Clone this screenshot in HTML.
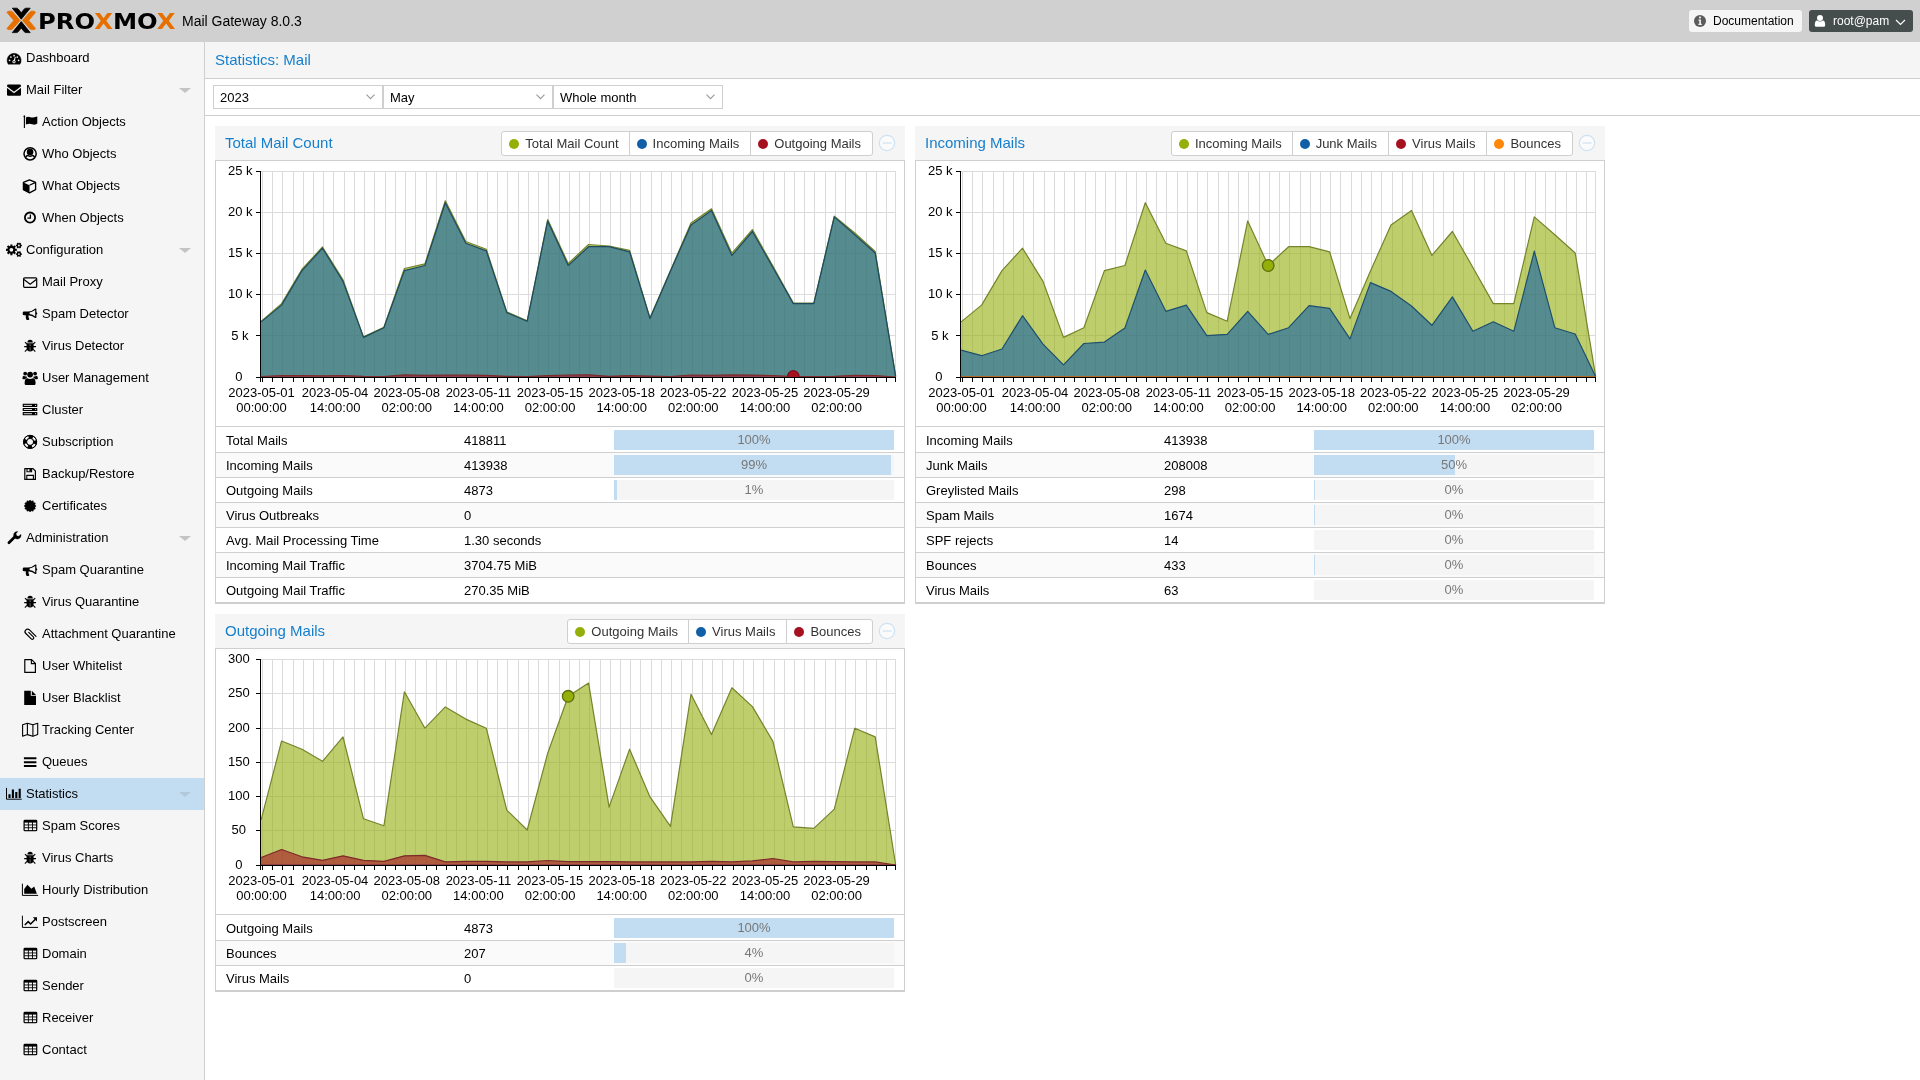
<!DOCTYPE html>
<html lang="en"><head><meta charset="utf-8"><title>Proxmox Mail Gateway</title>
<style>
*{box-sizing:border-box;margin:0;padding:0}
html,body{width:1920px;height:1080px;overflow:hidden}
body{will-change:transform;position:relative;background:#f5f5f5;font-family:"Liberation Sans",Helvetica,Arial,sans-serif;font-size:13px;color:#000}
#hdr{position:absolute;left:0;top:0;width:1920px;height:42px;background:#d0d0d0}
#logo{position:absolute;left:5px;top:0}
#word{position:absolute;left:37.6px;top:8px;font-family:"DejaVu Sans","Liberation Sans",sans-serif;font-weight:bold;font-size:21.4px;line-height:28px;letter-spacing:0;transform-origin:0 50%;transform:scaleX(1.134);color:#000;white-space:nowrap}
#word span{color:#e57000}
#ver{position:absolute;left:182px;top:12px;font-size:14px;line-height:18px}
#docbtn{position:absolute;left:1689px;top:10px;width:113px;height:22px;background:#f5f5f5;border-radius:3px;font-size:12px;line-height:22px;padding-left:24px}
#docbtn .ic{position:absolute;left:4px;top:4px;width:14px;height:14px}
#docbtn svg,#userbtn svg{display:block}
#userbtn{position:absolute;left:1809px;top:10px;width:104px;height:22px;background:#464d4d;border-radius:3px;font-size:12px;line-height:22px;color:#fff;padding-left:24px}
#userbtn .ic{position:absolute;left:5px;top:4px}
#userbtn .chev{position:absolute;left:86px;top:9px}
#nav{position:absolute;left:0;top:42px;width:205px;height:1038px;border-right:1px solid #cfcfcf;background:#f5f5f5}
.ni{position:relative;height:32px;line-height:32px;white-space:nowrap}
.ni .ic{position:absolute;top:8px;width:16px;height:16px}
.ni .ic svg{display:block;overflow:visible}
.ni.l0 .ic{left:6px}
.ni.l1 .ic{left:22px}
.ni.l0 .nt{position:absolute;left:26px}
.ni.l1 .nt{position:absolute;left:42px}
.ni.sel{background:#c2ddf2}
.sel .exp{border-top-color:#b2c9dc !important}
.exp{position:absolute;left:179px;top:14px;width:0;height:0;border-left:6px solid transparent;border-right:6px solid transparent;border-top:5px solid #c4c4c4}
#main{position:absolute;left:205px;top:42px;width:1715px;height:1038px;background:#fff}
#title{position:absolute;left:0;top:0;width:1715px;height:37px;background:#f5f5f5;border-bottom:1px solid #cfcfcf;color:#157fcc;font-size:15px;line-height:36px;padding-left:10px}
#tbar{position:absolute;left:0;top:37px;width:1715px;height:37px;border-bottom:1px solid #cfcfcf;background:#fff}
.combo{position:absolute;top:6px;width:170px;height:24px;border:1px solid #cfcfcf;background:#fff;line-height:24px;padding-left:6px}
.combo svg{position:absolute;right:7px;top:8px}
.panel{position:absolute;width:690px}
.p1{left:10px;top:84px}
.p2{left:710px;top:84px}
.p3{left:10px;top:572px}
.ph{position:relative;height:34px;background:#f5f5f5}
.pt{position:absolute;left:10px;top:0;line-height:34px;font-size:15px;color:#157fcc}
.legend{position:absolute;right:32px;top:5px;height:25px;display:flex;border:1px solid #cfcfcf;border-radius:3px;background:#fff;overflow:hidden}
.li{position:relative;height:23px;line-height:23px;padding:0 11px 0 23px;border-left:1px solid #cfcfcf;color:#333;white-space:nowrap}
.li.first{border-left:none;padding-right:10px}
.li i{position:absolute;left:7px;top:7px;width:10px;height:10px;border-radius:50%}
.zoomout{position:absolute;right:9px;top:8px;width:18px;height:18px}
.zoomout svg{display:block}
.pb0{border:1px solid #cfcfcf;background:#fff}
svg.chart{display:block;font-family:"Liberation Sans",Helvetica,Arial,sans-serif;font-size:13px}
svg.chart text{fill:#000}
.tbl{border-top:1px solid #cfcfcf}
.tr{position:relative;height:25px;line-height:26px;border-bottom:1px solid #cfcfcf;background:#fff}
.tr:last-child{height:25px}
.tr:first-child{height:26px;line-height:28px}
.tr:first-child .pb{top:3px}
.tr.alt{background:#fafafa}
.c1{position:absolute;left:10px}
.c2{position:absolute;left:248px}
.pb{position:absolute;left:398px;top:2px;width:280px;height:20px;background:#f5f5f5;text-align:center;line-height:20px;color:#777}
.pb b{position:absolute;left:0;top:0;height:20px;background:#c2ddf2}
.pb em{position:relative;font-style:normal}

</style></head><body>
<div id="hdr">
<svg id="logo" width="33" height="42" viewBox="0 0 33 42"><g stroke-linejoin="round" stroke-width=".8"><path d="M7.3 8.2H11.6Q12.6 8.2 13.2 9L16.25 12.8L19.3 9Q19.9 8.2 20.9 8.2H25.2L16.25 19.2Z" fill="#000" stroke="#000"/><path d="M7.3 32.6H11.6Q12.6 32.6 13.2 31.8L16.25 28L19.3 31.8Q19.9 32.6 20.9 32.6H25.2L16.25 21.6Z" fill="#000" stroke="#000"/><path d="M2 12.4Q2.4 11.2 4 11.2H6Q7 11.2 7.7 12L15 20.4L7.7 28.8Q7 29.6 6 29.6H4Q2.4 29.6 2 28.4L8.8 20.4Z" fill="#e57000" stroke="#e57000"/><path d="M30.5 12.4Q30.1 11.2 28.5 11.2H26.500Q25.5 11.2 24.8 12L17.5 20.4L24.8 28.8Q25.5 29.6 26.5 29.6H28.5Q30.1 29.6 30.500 28.4L23.7 20.4Z" fill="#e57000" stroke="#e57000"/></g></svg>
<span id="word">PRO<span>X</span>MO<span>X</span></span>
<span id="ver">Mail Gateway 8.0.3</span>
<div id="docbtn"><span class="ic"><svg width="14" height="14" viewBox="0 0 14 14"><circle cx="7" cy="7" r="6" fill="#5b5b5b"/><path d="M5.5 5.6H7.9V9.8H8.8V11H5.4V9.8H6.3V6.8H5.5Z" fill="#f5f5f5"/><rect x="6.1" y="2.6" width="1.8" height="1.8" fill="#f5f5f5"/></svg></span>Documentation</div>
<div id="userbtn"><span class="ic"><svg width="12" height="14" viewBox="0 0 12 14"><circle cx="6" cy="4" r="3" fill="#fff"/><path d="M.8 11.2Q.8 6.6 3 6.4Q6 8.4 9 6.4Q11.2 6.6 11.2 11.2Q11.2 12.8 9.6 12.8H2.4Q.8 12.8 .8 11.2Z" fill="#fff"/></svg></span>root@pam<svg class="chev" width="11" height="7" viewBox="0 0 11 7"><path d="M1 1L5.5 5.5L10 1" fill="none" stroke="#fff" stroke-width="1.2"/></svg></div>
</div>
<div id="nav">
<div class="ni l0"><span class="ic"><svg width="16" height="16" viewBox="0 0 16 16"><path d="M2.2 14.2A7.05 7.05 0 1 1 14 14.2Z" fill="#000" stroke="#000" stroke-width=".4" stroke-linejoin="round"/><g fill="#f5f5f5"><circle cx="3.6" cy="10.3" r=".85"/><circle cx="4.9" cy="7.1" r=".85"/><circle cx="8.1" cy="5.7" r=".85"/><circle cx="11.3" cy="7.1" r=".85"/><circle cx="12.6" cy="10.3" r=".85"/><circle cx="8" cy="11.7" r="1.6"/><path d="M7.4 11.2L8.9 6.8L9.8 7.1L8.6 11.6Z"/></g><circle cx="8" cy="11.7" r=".75" fill="#000"/></svg></span><span class="nt">Dashboard</span></div>
<div class="ni l0"><span class="ic"><svg width="16" height="16" viewBox="0 0 16 16"><rect x="1" y="2.6" width="14" height="11.2" rx="1.2" fill="#000"/><path d="M.8 5L8 10.4L15.2 5" fill="none" stroke="#f5f5f5" stroke-width="1.3"/></svg></span><span class="nt">Mail Filter</span><span class="exp"></span></div>
<div class="ni l1"><span class="ic"><svg width="16" height="16" viewBox="0 0 16 16"><path d="M2.4 1.7V14" stroke="#000" stroke-width="1.1"/><circle cx="2.4" cy="2.3" r=".9"/><path d="M3.9 3.6Q6 2.2 8.4 3.2T14.9 2.6Q15.3 2.5 15.3 3V9.6Q13 11.4 10.2 10.2T3.900 10.600Z" fill="#000"/></svg></span><span class="nt">Action Objects</span></div>
<div class="ni l1"><span class="ic"><svg width="16" height="16" viewBox="0 0 16 16"><circle cx="8.1" cy="7.8" r="6.1" fill="none" stroke="#000" stroke-width="1.5"/><circle cx="8.1" cy="6.1" r="3.3" fill="#000"/><path d="M3.5 12Q4 9.4 6 9.5Q8.1 11 10.2 9.5Q12.2 9.400 12.7 12" fill="none" stroke="#000" stroke-width="1.3"/></svg></span><span class="nt">Who Objects</span></div>
<div class="ni l1"><span class="ic"><svg width="16" height="16" viewBox="0 0 16 16"><path d="M7.5 1.8L13.6 4.400V11.700L7.5 14.8L1.4 11.7V4.4Z" fill="none" stroke="#000" stroke-width="1.3" stroke-linejoin="round"/><path d="M1.4 4.4L7.5 7.2V14.8L1.400 11.7Z" fill="#000"/><path d="M7.5 7.2L13.6 4.4" stroke="#000" stroke-width="1.2"/></svg></span><span class="nt">What Objects</span></div>
<div class="ni l1"><span class="ic"><svg width="16" height="16" viewBox="0 0 16 16"><circle cx="8" cy="7.6" r="5.1" fill="none" stroke="#000" stroke-width="1.8"/><path d="M8.4 4.4V8.2H5.4" fill="none" stroke="#000" stroke-width="1.3"/></svg></span><span class="nt">When Objects</span></div>
<div class="ni l0"><span class="ic"><svg width="16" height="16" viewBox="0 0 16 16"><path d="M10.79 6.71L10.79 8.89L9.36 8.74L8.86 9.94L9.98 10.84L8.44 12.38L7.54 11.26L6.34 11.76L6.49 13.19L4.31 13.19L4.46 11.76L3.26 11.26L2.36 12.38L0.82 10.84L1.94 9.94L1.44 8.74L0.01 8.89L0.01 6.71L1.44 6.86L1.94 5.66L0.82 4.76L2.36 3.22L3.26 4.34L4.46 3.84L4.31 2.41L6.49 2.41L6.34 3.84L7.54 4.34L8.44 3.22L9.98 4.76L8.86 5.66L9.36 6.86Z" fill="#000"/><circle cx="5.4" cy="7.8" r="1.9" fill="#f5f5f5"/><path d="M15.89 2.67L15.89 4.33L15.09 4.19L14.59 5.05L15.11 5.67L13.68 6.50L13.39 5.74L12.41 5.74L12.12 6.50L10.69 5.67L11.21 5.05L10.71 4.19L9.91 4.33L9.91 2.67L10.71 2.81L11.21 1.95L10.69 1.33L12.12 0.50L12.41 1.26L13.39 1.26L13.68 0.50L15.11 1.33L14.59 1.95L15.09 2.81Z" fill="#000"/><circle cx="12.9" cy="3.5" r="0.9" fill="#f5f5f5"/><path d="M15.89 11.27L15.89 12.93L15.09 12.79L14.59 13.65L15.11 14.27L13.68 15.10L13.39 14.34L12.41 14.34L12.12 15.10L10.69 14.27L11.21 13.65L10.71 12.79L9.91 12.93L9.91 11.27L10.71 11.41L11.21 10.55L10.69 9.93L12.12 9.10L12.41 9.86L13.39 9.86L13.68 9.10L15.11 9.93L14.59 10.55L15.09 11.41Z" fill="#000"/><circle cx="12.9" cy="12.1" r="0.9" fill="#f5f5f5"/></svg></span><span class="nt">Configuration</span><span class="exp"></span></div>
<div class="ni l1"><span class="ic"><svg width="16" height="16" viewBox="0 0 16 16"><rect x="1.6" y="3.8" width="13.1" height="9.5" rx="1" fill="none" stroke="#000" stroke-width="1.2"/><path d="M2 5.6L8.1 10.2L14.3 5.6" fill="none" stroke="#000" stroke-width="1.2"/></svg></span><span class="nt">Mail Proxy</span></div>
<div class="ni l1"><span class="ic"><svg width="16" height="16" viewBox="0 0 16 16"><path d="M2 5.6H6.2Q10.6 5.2 13.3 2.6Q14.3 2.2 14.4 3.2V6.2Q15.3 6.6 15.3 7.4T14.4 8.6V11.4Q14.2 12.4 13.3 12Q10.6 9.6 6.6 9.2Q6 11 7.4 13.2Q6.6 14.3 4.6 14Q3.4 11.6 3.8 9.2H2Q.8 9.2 .7 8V6.8Q.8 5.7 2 5.6Z" fill="#000"/><path d="M7.6 6.6Q10.8 6 13.2 4.1V10.4Q10.8 8.6 7.6 8.1Z" fill="#f5f5f5"/></svg></span><span class="nt">Spam Detector</span></div>
<div class="ni l1"><span class="ic"><svg width="16" height="16" viewBox="0 0 16 16"><path d="M5.4 4.4Q5.4 1.7 8.1 1.7T10.8 4.4Z" fill="#000"/><path d="M4.6 5.2H11.6V10Q11.6 13.4 8.1 13.4T4.6 10Z" fill="#000"/><path d="M8.1 6V12.6" stroke="#666" stroke-width="1"/><path d="M2.2 8.6H14M2.9 4.2L5 6M13.3 4.2L11.2 6M2.9 13.6L5 11.4M13.3 13.6L11.2 11.4" stroke="#000" stroke-width="1.1" fill="none"/></svg></span><span class="nt">Virus Detector</span></div>
<div class="ni l1"><span class="ic"><svg width="16" height="16" viewBox="0 0 16 16"><circle cx="8.1" cy="4.6" r="2.9" fill="#000"/><path d="M3.6 14.9Q2.6 14.9 2.6 13.6Q2.6 8.2 5.4 8.2Q8.1 9.8 10.8 8.2Q13.6 8.2 13.6 13.6Q13.6 14.9 12.6 14.9Z" fill="#000"/><circle cx="3.2" cy="3.6" r="1.9" fill="#000"/><circle cx="13.1" cy="3.6" r="1.9" fill="#000"/><path d="M.4 8.4Q.4 5.8 1.8 5.8Q3.4 6.8 4.6 6.2Q4.6 7.4 5 8Q3.6 8.2 3 9.2H1.4Q.4 9.2 .4 8.4Z" fill="#000"/><path d="M15.9 8.4Q15.9 5.8 14.5 5.8Q12.9 6.8 11.7 6.2Q11.7 7.4 11.3 8Q12.7 8.2 13.3 9.2H14.9Q15.9 9.2 15.9 8.4Z" fill="#000"/></svg></span><span class="nt">User Management</span></div>
<div class="ni l1"><span class="ic"><svg width="16" height="16" viewBox="0 0 16 16"><g fill="#000"><rect x=".7" y="1.7" width="14.6" height="3.2" rx=".4"/><rect x=".7" y="5.9" width="14.6" height="3.2" rx=".4"/><rect x=".7" y="10.1" width="14.6" height="3.2" rx=".4"/></g><g fill="#f5f5f5"><rect x="1.8" y="2.9" width="8.2" height=".9"/><rect x="1.8" y="7.1" width="8.2" height=".9"/><rect x="1.8" y="11.3" width="8.2" height=".9"/><circle cx="13.6" cy="3.3" r=".6"/><circle cx="13.6" cy="7.5" r=".6"/><circle cx="13.6" cy="11.7" r=".6"/></g></svg></span><span class="nt">Cluster</span></div>
<div class="ni l1"><span class="ic"><svg width="16" height="16" viewBox="0 0 16 16"><circle cx="8.1" cy="7.9" r="5.1" fill="none" stroke="#000" stroke-width="3.6"/><circle cx="8.1" cy="7.900" r="5.1" fill="none" stroke="#f5f5f5" stroke-width="2.2" stroke-dasharray="3.6 4.41" stroke-dashoffset="-2.2"/><circle cx="8.1" cy="7.9" r="6.6" fill="none" stroke="#000" stroke-width="1"/><circle cx="8.1" cy="7.9" r="3.5" fill="none" stroke="#000" stroke-width="1"/></svg></span><span class="nt">Subscription</span></div>
<div class="ni l1"><span class="ic"><svg width="16" height="16" viewBox="0 0 16 16"><path d="M2.8 2.6H11L13.4 5V13.4H2.8Z" fill="none" stroke="#000" stroke-width="1.2" stroke-linejoin="round"/><path d="M5 2.6V5.8H9.6V2.6" fill="none" stroke="#000" stroke-width="1.1"/><rect x="7.4" y="3" width="1.6" height="2.2" fill="#000"/><path d="M4.8 13.4V9.4H11.4V13.4" fill="none" stroke="#000" stroke-width="1.1"/></svg></span><span class="nt">Backup/Restore</span></div>
<div class="ni l1"><span class="ic"><svg width="16" height="16" viewBox="0 0 16 16"><path d="M14.10 8.00L12.83 9.27L13.30 11.00L11.56 11.46L11.10 13.20L9.37 12.73L8.10 14.00L6.83 12.73L5.10 13.20L4.64 11.46L2.90 11.00L3.37 9.27L2.10 8.00L3.37 6.73L2.90 5.00L4.64 4.54L5.10 2.80L6.83 3.27L8.10 2.00L9.37 3.27L11.10 2.80L11.56 4.54L13.30 5.00L12.83 6.73Z" fill="#000" stroke="#000" stroke-width=".5" stroke-linejoin="round"/></svg></span><span class="nt">Certificates</span></div>
<div class="ni l0"><span class="ic"><svg width="16" height="16" viewBox="0 0 16 16"><path d="M2.900 12.8L9.4 6.300" stroke="#000" stroke-width="2.700" stroke-linecap="round"/><path d="M15 4.3A3.800 3.800 0 1 1 11.9 1.500L10.1 3.4L10.4 5.700L12.8 6.200Z" fill="#000" stroke="#000" stroke-width=".3"/></svg></span><span class="nt">Administration</span><span class="exp"></span></div>
<div class="ni l1"><span class="ic"><svg width="16" height="16" viewBox="0 0 16 16"><path d="M2 5.6H6.2Q10.6 5.2 13.3 2.6Q14.3 2.2 14.4 3.2V6.2Q15.3 6.6 15.3 7.4T14.4 8.6V11.4Q14.2 12.4 13.3 12Q10.6 9.6 6.6 9.2Q6 11 7.4 13.2Q6.6 14.3 4.6 14Q3.4 11.6 3.8 9.2H2Q.8 9.2 .7 8V6.8Q.8 5.7 2 5.6Z" fill="#000"/><path d="M7.6 6.6Q10.8 6 13.2 4.1V10.4Q10.8 8.6 7.6 8.1Z" fill="#f5f5f5"/></svg></span><span class="nt">Spam Quarantine</span></div>
<div class="ni l1"><span class="ic"><svg width="16" height="16" viewBox="0 0 16 16"><path d="M5.4 4.4Q5.4 1.7 8.1 1.7T10.8 4.4Z" fill="#000"/><path d="M4.6 5.2H11.6V10Q11.6 13.4 8.1 13.4T4.6 10Z" fill="#000"/><path d="M8.1 6V12.6" stroke="#666" stroke-width="1"/><path d="M2.2 8.6H14M2.9 4.2L5 6M13.3 4.2L11.2 6M2.9 13.6L5 11.4M13.3 13.6L11.2 11.4" stroke="#000" stroke-width="1.1" fill="none"/></svg></span><span class="nt">Virus Quarantine</span></div>
<div class="ni l1"><span class="ic"><svg width="16" height="16" viewBox="0 0 16 16"><path d="M13.8 5.400H4.600a2.600 2.600 0 0 0 0 5.200H12.300a1.450 1.450 0 0 0 0 -2.900H5.800" fill="none" stroke="#000" stroke-width="1.2" stroke-linecap="round" transform="rotate(45 8 8) translate(0.100 0)"/></svg></span><span class="nt">Attachment Quarantine</span></div>
<div class="ni l1"><span class="ic"><svg width="16" height="16" viewBox="0 0 16 16"><path d="M2.8 1.6H9.6L13.4 5.4V14.4H2.8Z" fill="none" stroke="#000" stroke-width="1.2" stroke-linejoin="round"/><path d="M9.4 1.8V5.6H13.2" fill="none" stroke="#000" stroke-width="1.1"/></svg></span><span class="nt">User Whitelist</span></div>
<div class="ni l1"><span class="ic"><svg width="16" height="16" viewBox="0 0 16 16"><path d="M2.2 .8H8.8V5.8H14V15H2.2Z" fill="#000"/><path d="M9.8 .8L14 4.9H9.8Z" fill="#000"/></svg></span><span class="nt">User Blacklist</span></div>
<div class="ni l1"><span class="ic"><svg width="17" height="16" viewBox="0 0 17 16"><path d="M.6 2.8L5.4 1.2L10.9 2.8L15.7 1.2V12.6L10.9 14.2L5.4 12.6L.6 14.2Z" fill="none" stroke="#000" stroke-width="1.1" stroke-linejoin="round"/><path d="M5.4 1.2V12.6M10.9 2.8V14.2" stroke="#000" stroke-width="1.1"/></svg></span><span class="nt">Tracking Center</span></div>
<div class="ni l1"><span class="ic"><svg width="16" height="16" viewBox="0 0 16 16"><path d="M1.9 4.2H14.4M1.9 8.2H14.4M1.9 12.1H14.4" stroke="#000" stroke-width="2"/></svg></span><span class="nt">Queues</span></div>
<div class="ni l0 sel"><span class="ic"><svg width="16" height="16" viewBox="0 0 16 16"><path d="M.5 1.9V13.2H15.7" fill="none" stroke="#000" stroke-width="1"/><path d="M3.5 12V8.2M6.9 12V3.6M10.3 12V6M13.7 12V2.8" stroke="#000" stroke-width="2.1"/></svg></span><span class="nt">Statistics</span><span class="exp"></span></div>
<div class="ni l1"><span class="ic"><svg width="16" height="16" viewBox="0 0 16 16"><rect x="1.5" y="1.7" width="13.8" height="11.6" rx="1.4" fill="#000"/><g fill="#f5f5f5"><rect x="2.7" y="4.6" width="3.2" height="1.9"/><rect x="6.8" y="4.6" width="3.2" height="1.9"/><rect x="10.9" y="4.6" width="3.2" height="1.9"/><rect x="2.7" y="7.4" width="3.2" height="1.9"/><rect x="6.8" y="7.4" width="3.2" height="1.9"/><rect x="10.9" y="7.4" width="3.2" height="1.9"/><rect x="2.7" y="10.2" width="3.2" height="1.9"/><rect x="6.8" y="10.2" width="3.2" height="1.9"/><rect x="10.9" y="10.2" width="3.2" height="1.9"/></g></svg></span><span class="nt">Spam Scores</span></div>
<div class="ni l1"><span class="ic"><svg width="16" height="16" viewBox="0 0 16 16"><path d="M5.4 4.4Q5.4 1.7 8.1 1.7T10.8 4.4Z" fill="#000"/><path d="M4.6 5.2H11.6V10Q11.6 13.4 8.1 13.4T4.6 10Z" fill="#000"/><path d="M8.1 6V12.6" stroke="#666" stroke-width="1"/><path d="M2.2 8.6H14M2.9 4.2L5 6M13.3 4.2L11.2 6M2.9 13.6L5 11.4M13.3 13.6L11.2 11.4" stroke="#000" stroke-width="1.1" fill="none"/></svg></span><span class="nt">Virus Charts</span></div>
<div class="ni l1"><span class="ic"><svg width="17" height="16" viewBox="0 0 17 16"><path d="M.4 1.7V13.4H16.1" fill="none" stroke="#000" stroke-width="1"/><path d="M2.2 11.8V7L5.4 2.8L9.4 6.8L12.2 4.6L14.9 11.8Z" fill="#000"/></svg></span><span class="nt">Hourly Distribution</span></div>
<div class="ni l1"><span class="ic"><svg width="17" height="16" viewBox="0 0 17 16"><path d="M.4 1.7V13.4H16.1" fill="none" stroke="#000" stroke-width="1"/><path d="M2.8 11L6.2 7.6L8.6 10L13.4 5.2" fill="none" stroke="#000" stroke-width="1.5"/><path d="M10.8 3.2H15V7.4Z" fill="#000"/></svg></span><span class="nt">Postscreen</span></div>
<div class="ni l1"><span class="ic"><svg width="16" height="16" viewBox="0 0 16 16"><rect x="1.5" y="1.7" width="13.8" height="11.6" rx="1.4" fill="#000"/><g fill="#f5f5f5"><rect x="2.7" y="4.6" width="3.2" height="1.9"/><rect x="6.8" y="4.6" width="3.2" height="1.9"/><rect x="10.9" y="4.6" width="3.2" height="1.9"/><rect x="2.7" y="7.4" width="3.2" height="1.9"/><rect x="6.8" y="7.4" width="3.2" height="1.9"/><rect x="10.9" y="7.4" width="3.2" height="1.9"/><rect x="2.7" y="10.2" width="3.2" height="1.9"/><rect x="6.8" y="10.2" width="3.2" height="1.9"/><rect x="10.9" y="10.2" width="3.2" height="1.9"/></g></svg></span><span class="nt">Domain</span></div>
<div class="ni l1"><span class="ic"><svg width="16" height="16" viewBox="0 0 16 16"><rect x="1.5" y="1.7" width="13.8" height="11.6" rx="1.4" fill="#000"/><g fill="#f5f5f5"><rect x="2.7" y="4.6" width="3.2" height="1.9"/><rect x="6.8" y="4.6" width="3.2" height="1.9"/><rect x="10.9" y="4.6" width="3.2" height="1.9"/><rect x="2.7" y="7.4" width="3.2" height="1.9"/><rect x="6.8" y="7.4" width="3.2" height="1.9"/><rect x="10.9" y="7.4" width="3.2" height="1.9"/><rect x="2.7" y="10.2" width="3.2" height="1.9"/><rect x="6.8" y="10.2" width="3.2" height="1.9"/><rect x="10.9" y="10.2" width="3.2" height="1.9"/></g></svg></span><span class="nt">Sender</span></div>
<div class="ni l1"><span class="ic"><svg width="16" height="16" viewBox="0 0 16 16"><rect x="1.5" y="1.7" width="13.8" height="11.6" rx="1.4" fill="#000"/><g fill="#f5f5f5"><rect x="2.7" y="4.6" width="3.2" height="1.9"/><rect x="6.8" y="4.6" width="3.2" height="1.9"/><rect x="10.9" y="4.6" width="3.2" height="1.9"/><rect x="2.7" y="7.4" width="3.2" height="1.9"/><rect x="6.8" y="7.4" width="3.2" height="1.9"/><rect x="10.9" y="7.4" width="3.2" height="1.9"/><rect x="2.7" y="10.2" width="3.2" height="1.9"/><rect x="6.8" y="10.2" width="3.2" height="1.9"/><rect x="10.9" y="10.2" width="3.2" height="1.9"/></g></svg></span><span class="nt">Receiver</span></div>
<div class="ni l1"><span class="ic"><svg width="16" height="16" viewBox="0 0 16 16"><rect x="1.5" y="1.7" width="13.8" height="11.6" rx="1.4" fill="#000"/><g fill="#f5f5f5"><rect x="2.7" y="4.6" width="3.2" height="1.9"/><rect x="6.8" y="4.6" width="3.2" height="1.9"/><rect x="10.9" y="4.6" width="3.2" height="1.9"/><rect x="2.7" y="7.4" width="3.2" height="1.9"/><rect x="6.8" y="7.4" width="3.2" height="1.9"/><rect x="10.9" y="7.4" width="3.2" height="1.9"/><rect x="2.7" y="10.2" width="3.2" height="1.9"/><rect x="6.8" y="10.2" width="3.2" height="1.9"/><rect x="10.9" y="10.2" width="3.2" height="1.9"/></g></svg></span><span class="nt">Contact</span></div>
</div>
<div id="main">
<div id="title">Statistics: Mail</div>
<div id="tbar">
<div class="combo" style="left:8px">2023<svg width="9" height="6" viewBox="0 0 9 6"><path d="M.5 .6L4.500 4.700L8.5 .6" fill="none" stroke="#999" stroke-width="1.1"/></svg></div>
<div class="combo" style="left:178px">May<svg width="9" height="6" viewBox="0 0 9 6"><path d="M.5 .6L4.500 4.700L8.5 .6" fill="none" stroke="#999" stroke-width="1.1"/></svg></div>
<div class="combo" style="left:348px">Whole month<svg width="9" height="6" viewBox="0 0 9 6"><path d="M.5 .6L4.500 4.700L8.5 .6" fill="none" stroke="#999" stroke-width="1.1"/></svg></div>
</div>
<div class="panel p1"><div class="ph"><span class="pt">Total Mail Count</span><div class="legend"><div class="li first"><i style="background:#94ae0a"></i>Total Mail Count</div><div class="li"><i style="background:#115fa6"></i>Incoming Mails</div><div class="li"><i style="background:#a61120"></i>Outgoing Mails</div></div><div class="zoomout"><svg width="18" height="18" viewBox="0 0 18 18"><circle cx="9" cy="9" r="7.7" fill="#fff" fill-opacity=".6" stroke="#cde2f3" stroke-width="1.2"/><path d="M4.5 9H13.5" stroke="#cde2f3" stroke-width="1.2"/></svg></div></div><div class="pb0"><svg class="chart" width="688" height="265" viewBox="216 161 688 265">
<path d="M261 171.5 H896 M261 212.5 H896 M261 253.5 H896 M261 294.5 H896 M261 335.5 H896 M262.5 171 V377 M272.5 171 V377 M282.5 171 V377 M293.5 171 V377 M303.5 171 V377 M313.5 171 V377 M323.5 171 V377 M333.5 171 V377 M344.5 171 V377 M354.5 171 V377 M364.5 171 V377 M374.5 171 V377 M385.5 171 V377 M395.5 171 V377 M405.5 171 V377 M415.5 171 V377 M426.5 171 V377 M436.5 171 V377 M446.5 171 V377 M456.5 171 V377 M466.5 171 V377 M477.5 171 V377 M487.5 171 V377 M497.5 171 V377 M507.5 171 V377 M518.5 171 V377 M528.5 171 V377 M538.5 171 V377 M548.5 171 V377 M559.5 171 V377 M569.5 171 V377 M579.5 171 V377 M589.5 171 V377 M600.5 171 V377 M610.5 171 V377 M620.5 171 V377 M630.5 171 V377 M640.5 171 V377 M651.5 171 V377 M661.5 171 V377 M671.5 171 V377 M681.5 171 V377 M692.5 171 V377 M702.5 171 V377 M712.5 171 V377 M722.5 171 V377 M733.5 171 V377 M743.5 171 V377 M753.5 171 V377 M763.5 171 V377 M774.5 171 V377 M784.5 171 V377 M794.5 171 V377 M804.5 171 V377 M814.5 171 V377 M825.5 171 V377 M835.5 171 V377 M845.5 171 V377 M855.5 171 V377 M866.5 171 V377 M876.5 171 V377 M886.5 171 V377 M895.5 171 V377" stroke="#dbdbdb" stroke-width="1" fill="none"/>
<path d="M261.1 321.4 L281.6 303.6 L302.0 269.2 L322.5 247.0 L343.0 279.8 L363.5 336.9 L383.9 327.2 L404.4 268.5 L424.9 263.9 L445.3 200.8 L465.8 241.5 L486.3 249.3 L506.8 311.9 L527.2 320.8 L547.7 219.6 L568.2 263.5 L588.6 244.5 L609.1 246.0 L629.6 250.4 L650.0 317.8 L670.5 270.5 L691.0 222.9 L711.5 208.8 L731.9 253.2 L752.4 229.6 L772.9 266.1 L793.3 303.1 L813.8 303.2 L834.3 216.2 L854.8 233.0 L875.2 251.5 L895.7 376.6 L895.7 377.0 L260.5 377.0 Z" fill="#94ae0a" fill-opacity="0.6" stroke="none"/><path d="M261.1 321.4 L281.6 303.6 L302.0 269.2 L322.5 247.0 L343.0 279.8 L363.5 336.9 L383.9 327.2 L404.4 268.5 L424.9 263.9 L445.3 200.8 L465.8 241.5 L486.3 249.3 L506.8 311.9 L527.2 320.8 L547.7 219.6 L568.2 263.5 L588.6 244.5 L609.1 246.0 L629.6 250.4 L650.0 317.8 L670.5 270.5 L691.0 222.9 L711.5 208.8 L731.9 253.2 L752.4 229.6 L772.9 266.1 L793.3 303.1 L813.8 303.2 L834.3 216.2 L854.8 233.0 L875.2 251.5 L895.7 376.6" fill="none" stroke="#73852a" stroke-width="1.2" stroke-opacity="1" stroke-linejoin="round"/>
<path d="M261.1 321.9 L281.6 305.1 L302.0 270.6 L322.5 248.2 L343.0 281.4 L363.5 337.4 L383.9 327.7 L404.4 270.6 L424.9 265.5 L445.3 202.7 L465.8 243.3 L486.3 250.9 L506.8 312.6 L527.2 321.2 L547.7 220.9 L568.2 265.5 L588.6 246.7 L609.1 246.7 L629.6 251.8 L650.0 318.6 L670.5 271.0 L691.0 224.9 L711.5 210.4 L731.9 255.4 L752.4 231.5 L772.9 267.5 L793.3 303.6 L813.8 303.6 L834.3 216.9 L854.8 234.7 L875.2 253.0 L895.7 376.6 L895.7 377.0 L260.5 377.0 Z" fill="#115fa6" fill-opacity="0.6" stroke="none"/><path d="M261.1 321.9 L281.6 305.1 L302.0 270.6 L322.5 248.2 L343.0 281.4 L363.5 337.4 L383.9 327.7 L404.4 270.6 L424.9 265.5 L445.3 202.7 L465.8 243.3 L486.3 250.9 L506.8 312.6 L527.2 321.2 L547.7 220.9 L568.2 265.5 L588.6 246.7 L609.1 246.7 L629.6 251.8 L650.0 318.6 L670.5 271.0 L691.0 224.9 L711.5 210.4 L731.9 255.4 L752.4 231.5 L772.9 267.5 L793.3 303.6 L813.8 303.6 L834.3 216.9 L854.8 234.7 L875.2 253.0 L895.7 376.6" fill="none" stroke="#1d4a60" stroke-width="1.2" stroke-opacity="1" stroke-linejoin="round"/>
<path d="M261.1 376.5 L281.6 375.5 L302.0 375.6 L322.5 375.8 L343.0 375.5 L363.5 376.4 L383.9 376.5 L404.4 374.9 L424.9 375.4 L445.3 375.1 L465.8 375.2 L486.3 375.4 L506.8 376.3 L527.2 376.6 L547.7 375.7 L568.2 375.0 L588.6 374.8 L609.1 376.3 L629.6 375.6 L650.0 376.2 L670.5 376.5 L691.0 375.0 L711.5 375.4 L731.9 374.9 L752.4 375.1 L772.9 375.5 L793.3 376.5 L813.8 376.6 L834.3 376.3 L854.8 375.4 L875.2 375.5 L895.7 377.0 L895.7 377.0 L260.5 377.0 Z" fill="#a61120" fill-opacity="0.6" stroke="none"/><path d="M261.1 376.5 L281.6 375.5 L302.0 375.6 L322.5 375.8 L343.0 375.5 L363.5 376.4 L383.9 376.5 L404.4 374.9 L424.9 375.4 L445.3 375.1 L465.8 375.2 L486.3 375.4 L506.8 376.3 L527.2 376.6 L547.7 375.7 L568.2 375.0 L588.6 374.8 L609.1 376.3 L629.6 375.6 L650.0 376.2 L670.5 376.5 L691.0 375.0 L711.5 375.4 L731.9 374.9 L752.4 375.1 L772.9 375.5 L793.3 376.5 L813.8 376.6 L834.3 376.3 L854.8 375.4 L875.2 375.5 L895.7 377.0" fill="none" stroke="#7d2a2a" stroke-width="1.2" stroke-opacity="1" stroke-linejoin="round"/>
<svg x="260" y="160" width="640" height="217.5" viewBox="260 160 640 217.5"><circle cx="793.3" cy="376.5" r="5.8" fill="#a61120" stroke="#7c0d18" stroke-width="1.3"/></svg>
<path d="M260.5 171 V382 M256 377.5 H896 M256 171.5 H261 M256 212.5 H261 M256 253.5 H261 M256 294.5 H261 M256 335.5 H261 M262.5 377 V382 M272.5 377 V382 M282.5 377 V382 M293.5 377 V382 M303.5 377 V382 M313.5 377 V382 M323.5 377 V382 M333.5 377 V382 M344.5 377 V382 M354.5 377 V382 M364.5 377 V382 M374.5 377 V382 M385.5 377 V382 M395.5 377 V382 M405.5 377 V382 M415.5 377 V382 M426.5 377 V382 M436.5 377 V382 M446.5 377 V382 M456.5 377 V382 M466.5 377 V382 M477.5 377 V382 M487.5 377 V382 M497.5 377 V382 M507.5 377 V382 M518.5 377 V382 M528.5 377 V382 M538.5 377 V382 M548.5 377 V382 M559.5 377 V382 M569.5 377 V382 M579.5 377 V382 M589.5 377 V382 M600.5 377 V382 M610.5 377 V382 M620.5 377 V382 M630.5 377 V382 M640.5 377 V382 M651.5 377 V382 M661.5 377 V382 M671.5 377 V382 M681.5 377 V382 M692.5 377 V382 M702.5 377 V382 M712.5 377 V382 M722.5 377 V382 M733.5 377 V382 M743.5 377 V382 M753.5 377 V382 M763.5 377 V382 M774.5 377 V382 M784.5 377 V382 M794.5 377 V382 M804.5 377 V382 M814.5 377 V382 M825.5 377 V382 M835.5 377 V382 M845.5 377 V382 M855.5 377 V382 M866.5 377 V382 M876.5 377 V382 M886.5 377 V382 M895.5 377 V382" stroke="#000" stroke-width="1" fill="none"/>
<text x="240.3" y="175.1" text-anchor="middle">25 k</text>
<text x="240.3" y="216.2" text-anchor="middle">20 k</text>
<text x="240.3" y="257.3" text-anchor="middle">15 k</text>
<text x="240.3" y="298.4" text-anchor="middle">10 k</text>
<text x="239.9" y="339.5" text-anchor="middle">5 k</text>
<text x="238.8" y="380.6" text-anchor="middle">0</text>
<text x="261.5" y="396.8" text-anchor="middle">2023-05-01</text><text x="261.5" y="411.8" text-anchor="middle">00:00:00</text>
<text x="335.1" y="396.8" text-anchor="middle">2023-05-04</text><text x="335.1" y="411.8" text-anchor="middle">14:00:00</text>
<text x="406.8" y="396.8" text-anchor="middle">2023-05-08</text><text x="406.8" y="411.8" text-anchor="middle">02:00:00</text>
<text x="478.4" y="396.8" text-anchor="middle">2023-05-11</text><text x="478.4" y="411.8" text-anchor="middle">14:00:00</text>
<text x="550.1" y="396.8" text-anchor="middle">2023-05-15</text><text x="550.1" y="411.8" text-anchor="middle">02:00:00</text>
<text x="621.7" y="396.8" text-anchor="middle">2023-05-18</text><text x="621.7" y="411.8" text-anchor="middle">14:00:00</text>
<text x="693.3" y="396.8" text-anchor="middle">2023-05-22</text><text x="693.3" y="411.8" text-anchor="middle">02:00:00</text>
<text x="765.0" y="396.8" text-anchor="middle">2023-05-25</text><text x="765.0" y="411.8" text-anchor="middle">14:00:00</text>
<text x="836.6" y="396.8" text-anchor="middle">2023-05-29</text><text x="836.6" y="411.8" text-anchor="middle">02:00:00</text>
</svg><div class="tbl"><div class="tr"><span class="c1">Total Mails</span><span class="c2">418811</span><span class="pb"><b style="width:280px"></b><em>100%</em></span></div><div class="tr alt"><span class="c1">Incoming Mails</span><span class="c2">413938</span><span class="pb"><b style="width:277px"></b><em>99%</em></span></div><div class="tr"><span class="c1">Outgoing Mails</span><span class="c2">4873</span><span class="pb"><b style="width:3px"></b><em>1%</em></span></div><div class="tr alt"><span class="c1">Virus Outbreaks</span><span class="c2">0</span></div><div class="tr"><span class="c1">Avg. Mail Processing Time</span><span class="c2">1.30 seconds</span></div><div class="tr alt"><span class="c1">Incoming Mail Traffic</span><span class="c2">3704.75 MiB</span></div><div class="tr"><span class="c1">Outgoing Mail Traffic</span><span class="c2">270.35 MiB</span></div></div></div></div>
<div class="panel p2"><div class="ph"><span class="pt">Incoming Mails</span><div class="legend"><div class="li first"><i style="background:#94ae0a"></i>Incoming Mails</div><div class="li"><i style="background:#115fa6"></i>Junk Mails</div><div class="li"><i style="background:#a61120"></i>Virus Mails</div><div class="li"><i style="background:#ff8809"></i>Bounces</div></div><div class="zoomout"><svg width="18" height="18" viewBox="0 0 18 18"><circle cx="9" cy="9" r="7.7" fill="#fff" fill-opacity=".6" stroke="#cde2f3" stroke-width="1.2"/><path d="M4.5 9H13.5" stroke="#cde2f3" stroke-width="1.2"/></svg></div></div><div class="pb0"><svg class="chart" width="688" height="265" viewBox="216 161 688 265">
<path d="M261 171.5 H896 M261 212.5 H896 M261 253.5 H896 M261 294.5 H896 M261 335.5 H896 M262.5 171 V377 M272.5 171 V377 M282.5 171 V377 M293.5 171 V377 M303.5 171 V377 M313.5 171 V377 M323.5 171 V377 M333.5 171 V377 M344.5 171 V377 M354.5 171 V377 M364.5 171 V377 M374.5 171 V377 M385.5 171 V377 M395.5 171 V377 M405.5 171 V377 M415.5 171 V377 M426.5 171 V377 M436.5 171 V377 M446.5 171 V377 M456.5 171 V377 M466.5 171 V377 M477.5 171 V377 M487.5 171 V377 M497.5 171 V377 M507.5 171 V377 M518.5 171 V377 M528.5 171 V377 M538.5 171 V377 M548.5 171 V377 M559.5 171 V377 M569.5 171 V377 M579.5 171 V377 M589.5 171 V377 M600.5 171 V377 M610.5 171 V377 M620.5 171 V377 M630.5 171 V377 M640.5 171 V377 M651.5 171 V377 M661.5 171 V377 M671.5 171 V377 M681.5 171 V377 M692.5 171 V377 M702.5 171 V377 M712.5 171 V377 M722.5 171 V377 M733.5 171 V377 M743.5 171 V377 M753.5 171 V377 M763.5 171 V377 M774.5 171 V377 M784.5 171 V377 M794.5 171 V377 M804.5 171 V377 M814.5 171 V377 M825.5 171 V377 M835.5 171 V377 M845.5 171 V377 M855.5 171 V377 M866.5 171 V377 M876.5 171 V377 M886.5 171 V377 M895.5 171 V377" stroke="#dbdbdb" stroke-width="1" fill="none"/>
<path d="M261.1 321.9 L281.6 305.1 L302.0 270.6 L322.5 248.2 L343.0 281.4 L363.5 337.4 L383.9 327.7 L404.4 270.6 L424.9 265.5 L445.3 202.7 L465.8 243.3 L486.3 250.9 L506.8 312.6 L527.2 321.2 L547.7 220.9 L568.2 265.5 L588.6 246.7 L609.1 246.7 L629.6 251.8 L650.0 318.6 L670.5 271.0 L691.0 224.9 L711.5 210.4 L731.9 255.4 L752.4 231.5 L772.9 267.5 L793.3 303.6 L813.8 303.6 L834.3 216.9 L854.8 234.7 L875.2 253.0 L895.7 376.6 L895.7 377.0 L260.5 377.0 Z" fill="#94ae0a" fill-opacity="0.6" stroke="none"/><path d="M261.1 321.9 L281.6 305.1 L302.0 270.6 L322.5 248.2 L343.0 281.4 L363.5 337.4 L383.9 327.7 L404.4 270.6 L424.9 265.5 L445.3 202.7 L465.8 243.3 L486.3 250.9 L506.8 312.6 L527.2 321.2 L547.7 220.9 L568.2 265.5 L588.6 246.7 L609.1 246.7 L629.6 251.8 L650.0 318.6 L670.5 271.0 L691.0 224.9 L711.5 210.4 L731.9 255.4 L752.4 231.5 L772.9 267.5 L793.3 303.6 L813.8 303.6 L834.3 216.9 L854.8 234.7 L875.2 253.0 L895.7 376.6" fill="none" stroke="#73852a" stroke-width="1.2" stroke-opacity="1" stroke-linejoin="round"/>
<path d="M261.1 350.2 L281.6 355.7 L302.0 349.0 L322.5 315.7 L343.0 344.1 L363.5 364.8 L383.9 343.5 L404.4 342.1 L424.9 327.9 L445.3 270.0 L465.8 311.3 L486.3 305.2 L506.8 335.6 L527.2 334.4 L547.7 311.3 L568.2 334.4 L588.6 327.7 L609.1 305.6 L629.6 308.4 L650.0 338.9 L670.5 282.6 L691.0 291.4 L711.5 306.0 L731.9 325.3 L752.4 296.9 L772.9 331.3 L793.3 321.8 L813.8 331.3 L834.3 251.2 L854.8 327.7 L875.2 334.0 L895.7 376.8 L895.7 377.0 L260.5 377.0 Z" fill="#115fa6" fill-opacity="0.6" stroke="none"/><path d="M261.1 350.2 L281.6 355.7 L302.0 349.0 L322.5 315.7 L343.0 344.1 L363.5 364.8 L383.9 343.5 L404.4 342.1 L424.9 327.9 L445.3 270.0 L465.8 311.3 L486.3 305.2 L506.8 335.6 L527.2 334.4 L547.7 311.3 L568.2 334.4 L588.6 327.7 L609.1 305.6 L629.6 308.4 L650.0 338.9 L670.5 282.6 L691.0 291.4 L711.5 306.0 L731.9 325.3 L752.4 296.9 L772.9 331.3 L793.3 321.8 L813.8 331.3 L834.3 251.2 L854.8 327.7 L875.2 334.0 L895.7 376.8" fill="none" stroke="#1d4f6e" stroke-width="1.2" stroke-opacity="1" stroke-linejoin="round"/>
<path d="M261.1 377.0 L281.6 377.0 L302.0 377.0 L322.5 377.0 L343.0 377.0 L363.5 377.0 L383.9 377.0 L404.4 377.0 L424.9 377.0 L445.3 377.0 L465.8 377.0 L486.3 377.0 L506.8 377.0 L527.2 377.0 L547.7 377.0 L568.2 377.0 L588.6 377.0 L609.1 377.0 L629.6 377.0 L650.0 377.0 L670.5 377.0 L691.0 377.0 L711.5 377.0 L731.9 377.0 L752.4 377.0 L772.9 377.0 L793.3 377.0 L813.8 377.0 L834.3 377.0 L854.8 377.0 L875.2 377.0 L895.7 377.0 L895.7 377.0 L260.5 377.0 Z" fill="#a61120" fill-opacity="0.6" stroke="none"/><path d="M261.1 377.0 L281.6 377.0 L302.0 377.0 L322.5 377.0 L343.0 377.0 L363.5 377.0 L383.9 377.0 L404.4 377.0 L424.9 377.0 L445.3 377.0 L465.8 377.0 L486.3 377.0 L506.8 377.0 L527.2 377.0 L547.7 377.0 L568.2 377.0 L588.6 377.0 L609.1 377.0 L629.6 377.0 L650.0 377.0 L670.5 377.0 L691.0 377.0 L711.5 377.0 L731.9 377.0 L752.4 377.0 L772.9 377.0 L793.3 377.0 L813.8 377.0 L834.3 377.0 L854.8 377.0 L875.2 377.0 L895.7 377.0" fill="none" stroke="#7d2a2a" stroke-width="1.2" stroke-opacity="1" stroke-linejoin="round"/>
<path d="M261.1 376.9 L281.6 376.9 L302.0 376.9 L322.5 376.9 L343.0 376.9 L363.5 376.9 L383.9 376.9 L404.4 376.9 L424.9 376.9 L445.3 376.9 L465.8 376.9 L486.3 376.9 L506.8 376.9 L527.2 376.9 L547.7 376.9 L568.2 376.9 L588.6 376.9 L609.1 376.9 L629.6 376.9 L650.0 376.9 L670.5 376.9 L691.0 376.9 L711.5 376.9 L731.9 376.9 L752.4 376.9 L772.9 376.9 L793.3 376.9 L813.8 376.9 L834.3 376.9 L854.8 376.9 L875.2 376.9 L895.7 376.9 L895.7 377.0 L260.5 377.0 Z" fill="#ff8809" fill-opacity="0.6" stroke="none"/><path d="M261.1 376.9 L281.6 376.9 L302.0 376.9 L322.5 376.9 L343.0 376.9 L363.5 376.9 L383.9 376.9 L404.4 376.9 L424.9 376.9 L445.3 376.9 L465.8 376.9 L486.3 376.9 L506.8 376.9 L527.2 376.9 L547.7 376.9 L568.2 376.9 L588.6 376.9 L609.1 376.9 L629.6 376.9 L650.0 376.9 L670.5 376.9 L691.0 376.9 L711.5 376.9 L731.9 376.9 L752.4 376.9 L772.9 376.9 L793.3 376.9 L813.8 376.9 L834.3 376.9 L854.8 376.9 L875.2 376.9 L895.7 376.9" fill="none" stroke="#c96d10" stroke-width="1.2" stroke-opacity="1" stroke-linejoin="round"/>
<svg x="260" y="160" width="640" height="217.5" viewBox="260 160 640 217.5"><circle cx="568.2" cy="265.5" r="5.8" fill="#94ae0a" stroke="#5d6e06" stroke-width="1.3"/></svg>
<path d="M260.5 171 V382 M256 377.5 H896 M256 171.5 H261 M256 212.5 H261 M256 253.5 H261 M256 294.5 H261 M256 335.5 H261 M262.5 377 V382 M272.5 377 V382 M282.5 377 V382 M293.5 377 V382 M303.5 377 V382 M313.5 377 V382 M323.5 377 V382 M333.5 377 V382 M344.5 377 V382 M354.5 377 V382 M364.5 377 V382 M374.5 377 V382 M385.5 377 V382 M395.5 377 V382 M405.5 377 V382 M415.5 377 V382 M426.5 377 V382 M436.5 377 V382 M446.5 377 V382 M456.5 377 V382 M466.5 377 V382 M477.5 377 V382 M487.5 377 V382 M497.5 377 V382 M507.5 377 V382 M518.5 377 V382 M528.5 377 V382 M538.5 377 V382 M548.5 377 V382 M559.5 377 V382 M569.5 377 V382 M579.5 377 V382 M589.5 377 V382 M600.5 377 V382 M610.5 377 V382 M620.5 377 V382 M630.5 377 V382 M640.5 377 V382 M651.5 377 V382 M661.5 377 V382 M671.5 377 V382 M681.5 377 V382 M692.5 377 V382 M702.5 377 V382 M712.5 377 V382 M722.5 377 V382 M733.5 377 V382 M743.5 377 V382 M753.5 377 V382 M763.5 377 V382 M774.5 377 V382 M784.5 377 V382 M794.5 377 V382 M804.5 377 V382 M814.5 377 V382 M825.5 377 V382 M835.5 377 V382 M845.5 377 V382 M855.5 377 V382 M866.5 377 V382 M876.5 377 V382 M886.5 377 V382 M895.5 377 V382" stroke="#000" stroke-width="1" fill="none"/>
<text x="240.3" y="175.1" text-anchor="middle">25 k</text>
<text x="240.3" y="216.2" text-anchor="middle">20 k</text>
<text x="240.3" y="257.3" text-anchor="middle">15 k</text>
<text x="240.3" y="298.4" text-anchor="middle">10 k</text>
<text x="239.9" y="339.5" text-anchor="middle">5 k</text>
<text x="238.8" y="380.6" text-anchor="middle">0</text>
<text x="261.5" y="396.8" text-anchor="middle">2023-05-01</text><text x="261.5" y="411.8" text-anchor="middle">00:00:00</text>
<text x="335.1" y="396.8" text-anchor="middle">2023-05-04</text><text x="335.1" y="411.8" text-anchor="middle">14:00:00</text>
<text x="406.8" y="396.8" text-anchor="middle">2023-05-08</text><text x="406.8" y="411.8" text-anchor="middle">02:00:00</text>
<text x="478.4" y="396.8" text-anchor="middle">2023-05-11</text><text x="478.4" y="411.8" text-anchor="middle">14:00:00</text>
<text x="550.1" y="396.8" text-anchor="middle">2023-05-15</text><text x="550.1" y="411.8" text-anchor="middle">02:00:00</text>
<text x="621.7" y="396.8" text-anchor="middle">2023-05-18</text><text x="621.7" y="411.8" text-anchor="middle">14:00:00</text>
<text x="693.3" y="396.8" text-anchor="middle">2023-05-22</text><text x="693.3" y="411.8" text-anchor="middle">02:00:00</text>
<text x="765.0" y="396.8" text-anchor="middle">2023-05-25</text><text x="765.0" y="411.8" text-anchor="middle">14:00:00</text>
<text x="836.6" y="396.8" text-anchor="middle">2023-05-29</text><text x="836.6" y="411.8" text-anchor="middle">02:00:00</text>
</svg><div class="tbl"><div class="tr"><span class="c1">Incoming Mails</span><span class="c2">413938</span><span class="pb"><b style="width:280px"></b><em>100%</em></span></div><div class="tr alt"><span class="c1">Junk Mails</span><span class="c2">208008</span><span class="pb"><b style="width:141px"></b><em>50%</em></span></div><div class="tr"><span class="c1">Greylisted Mails</span><span class="c2">298</span><span class="pb"><b style="width:1px"></b><em>0%</em></span></div><div class="tr alt"><span class="c1">Spam Mails</span><span class="c2">1674</span><span class="pb"><b style="width:1px"></b><em>0%</em></span></div><div class="tr"><span class="c1">SPF rejects</span><span class="c2">14</span><span class="pb"><b style="width:0px"></b><em>0%</em></span></div><div class="tr alt"><span class="c1">Bounces</span><span class="c2">433</span><span class="pb"><b style="width:1px"></b><em>0%</em></span></div><div class="tr"><span class="c1">Virus Mails</span><span class="c2">63</span><span class="pb"><b style="width:0px"></b><em>0%</em></span></div></div></div></div>
<div class="panel p3"><div class="ph"><span class="pt">Outgoing Mails</span><div class="legend"><div class="li first"><i style="background:#94ae0a"></i>Outgoing Mails</div><div class="li"><i style="background:#115fa6"></i>Virus Mails</div><div class="li"><i style="background:#a61120"></i>Bounces</div></div><div class="zoomout"><svg width="18" height="18" viewBox="0 0 18 18"><circle cx="9" cy="9" r="7.7" fill="#fff" fill-opacity=".6" stroke="#cde2f3" stroke-width="1.2"/><path d="M4.5 9H13.5" stroke="#cde2f3" stroke-width="1.2"/></svg></div></div><div class="pb0"><svg class="chart" width="688" height="265" viewBox="216 161 688 265">
<path d="M261 171.5 H896 M261 205.5 H896 M261 240.5 H896 M261 274.5 H896 M261 308.5 H896 M261 342.5 H896 M262.5 171 V377 M272.5 171 V377 M282.5 171 V377 M293.5 171 V377 M303.5 171 V377 M313.5 171 V377 M323.5 171 V377 M333.5 171 V377 M344.5 171 V377 M354.5 171 V377 M364.5 171 V377 M374.5 171 V377 M385.5 171 V377 M395.5 171 V377 M405.5 171 V377 M415.5 171 V377 M426.5 171 V377 M436.5 171 V377 M446.5 171 V377 M456.5 171 V377 M466.5 171 V377 M477.5 171 V377 M487.5 171 V377 M497.5 171 V377 M507.5 171 V377 M518.5 171 V377 M528.5 171 V377 M538.5 171 V377 M548.5 171 V377 M559.5 171 V377 M569.5 171 V377 M579.5 171 V377 M589.5 171 V377 M600.5 171 V377 M610.5 171 V377 M620.5 171 V377 M630.5 171 V377 M640.5 171 V377 M651.5 171 V377 M661.5 171 V377 M671.5 171 V377 M681.5 171 V377 M692.5 171 V377 M702.5 171 V377 M712.5 171 V377 M722.5 171 V377 M733.5 171 V377 M743.5 171 V377 M753.5 171 V377 M763.5 171 V377 M774.5 171 V377 M784.5 171 V377 M794.5 171 V377 M804.5 171 V377 M814.5 171 V377 M825.5 171 V377 M835.5 171 V377 M845.5 171 V377 M855.5 171 V377 M866.5 171 V377 M876.5 171 V377 M886.5 171 V377 M895.5 171 V377" stroke="#dbdbdb" stroke-width="1" fill="none"/>
<path d="M261.1 331.9 L281.6 253.0 L302.0 261.2 L322.5 273.3 L343.0 248.9 L363.5 330.8 L383.9 337.8 L404.4 203.8 L424.9 240.2 L445.3 218.9 L465.8 231.1 L486.3 240.2 L506.8 322.1 L527.2 342.0 L547.7 265.2 L568.2 208.3 L588.6 195.1 L609.1 319.1 L629.6 261.2 L650.0 308.9 L670.5 338.4 L691.0 206.3 L711.5 246.6 L731.9 199.8 L752.4 218.6 L772.9 253.4 L793.3 338.8 L813.8 340.4 L834.3 321.1 L854.8 240.2 L875.2 248.9 L895.7 377.0 L895.7 377.0 L260.5 377.0 Z" fill="#94ae0a" fill-opacity="0.6" stroke="none"/><path d="M261.1 331.9 L281.6 253.0 L302.0 261.2 L322.5 273.3 L343.0 248.9 L363.5 330.8 L383.9 337.8 L404.4 203.8 L424.9 240.2 L445.3 218.9 L465.8 231.1 L486.3 240.2 L506.8 322.1 L527.2 342.0 L547.7 265.2 L568.2 208.3 L588.6 195.1 L609.1 319.1 L629.6 261.2 L650.0 308.9 L670.5 338.4 L691.0 206.3 L711.5 246.6 L731.9 199.8 L752.4 218.6 L772.9 253.4 L793.3 338.8 L813.8 340.4 L834.3 321.1 L854.8 240.2 L875.2 248.9 L895.7 377.0" fill="none" stroke="#73852a" stroke-width="1.2" stroke-opacity="1" stroke-linejoin="round"/>
<path d="M261.1 377.0 L281.6 377.0 L302.0 377.0 L322.5 377.0 L343.0 377.0 L363.5 377.0 L383.9 377.0 L404.4 377.0 L424.9 377.0 L445.3 377.0 L465.8 377.0 L486.3 377.0 L506.8 377.0 L527.2 377.0 L547.7 377.0 L568.2 377.0 L588.6 377.0 L609.1 377.0 L629.6 377.0 L650.0 377.0 L670.5 377.0 L691.0 377.0 L711.5 377.0 L731.9 377.0 L752.4 377.0 L772.9 377.0 L793.3 377.0 L813.8 377.0 L834.3 377.0 L854.8 377.0 L875.2 377.0 L895.7 377.0 L895.7 377.0 L260.5 377.0 Z" fill="#115fa6" fill-opacity="0.6" stroke="none"/><path d="M261.1 377.0 L281.6 377.0 L302.0 377.0 L322.5 377.0 L343.0 377.0 L363.5 377.0 L383.9 377.0 L404.4 377.0 L424.9 377.0 L445.3 377.0 L465.8 377.0 L486.3 377.0 L506.8 377.0 L527.2 377.0 L547.7 377.0 L568.2 377.0 L588.6 377.0 L609.1 377.0 L629.6 377.0 L650.0 377.0 L670.5 377.0 L691.0 377.0 L711.5 377.0 L731.9 377.0 L752.4 377.0 L772.9 377.0 L793.3 377.0 L813.8 377.0 L834.3 377.0 L854.8 377.0 L875.2 377.0 L895.7 377.0" fill="none" stroke="#1d4f6e" stroke-width="1.2" stroke-opacity="1" stroke-linejoin="round"/>
<path d="M261.1 369.5 L281.6 361.5 L302.0 368.8 L322.5 372.3 L343.0 367.8 L363.5 372.3 L383.9 373.3 L404.4 367.8 L424.9 367.4 L445.3 373.9 L465.8 373.3 L486.3 373.3 L506.8 373.9 L527.2 373.9 L547.7 372.5 L568.2 373.6 L588.6 373.6 L609.1 373.6 L629.6 373.9 L650.0 373.9 L670.5 373.9 L691.0 373.9 L711.5 373.3 L731.9 373.9 L752.4 372.9 L772.9 370.5 L793.3 373.9 L813.8 373.3 L834.3 373.7 L854.8 373.9 L875.2 373.9 L895.7 377.0 L895.7 377.0 L260.5 377.0 Z" fill="#a61120" fill-opacity="0.6" stroke="none"/><path d="M261.1 369.5 L281.6 361.5 L302.0 368.8 L322.5 372.3 L343.0 367.8 L363.5 372.3 L383.9 373.3 L404.4 367.8 L424.9 367.4 L445.3 373.9 L465.8 373.3 L486.3 373.3 L506.8 373.9 L527.2 373.9 L547.7 372.5 L568.2 373.6 L588.6 373.6 L609.1 373.6 L629.6 373.9 L650.0 373.9 L670.5 373.9 L691.0 373.9 L711.5 373.3 L731.9 373.9 L752.4 372.9 L772.9 370.5 L793.3 373.9 L813.8 373.3 L834.3 373.7 L854.8 373.9 L875.2 373.9 L895.7 377.0" fill="none" stroke="#7d2a2a" stroke-width="1.2" stroke-opacity="1" stroke-linejoin="round"/>
<svg x="260" y="160" width="640" height="217.5" viewBox="260 160 640 217.5"><circle cx="568.2" cy="208.3" r="5.8" fill="#94ae0a" stroke="#5d6e06" stroke-width="1.3"/></svg>
<path d="M260.5 171 V382 M256 377.5 H896 M256 171.5 H261 M256 205.5 H261 M256 240.5 H261 M256 274.5 H261 M256 308.5 H261 M256 342.5 H261 M262.5 377 V382 M272.5 377 V382 M282.5 377 V382 M293.5 377 V382 M303.5 377 V382 M313.5 377 V382 M323.5 377 V382 M333.5 377 V382 M344.5 377 V382 M354.5 377 V382 M364.5 377 V382 M374.5 377 V382 M385.5 377 V382 M395.5 377 V382 M405.5 377 V382 M415.5 377 V382 M426.5 377 V382 M436.5 377 V382 M446.5 377 V382 M456.5 377 V382 M466.5 377 V382 M477.5 377 V382 M487.5 377 V382 M497.5 377 V382 M507.5 377 V382 M518.5 377 V382 M528.5 377 V382 M538.5 377 V382 M548.5 377 V382 M559.5 377 V382 M569.5 377 V382 M579.5 377 V382 M589.5 377 V382 M600.5 377 V382 M610.5 377 V382 M620.5 377 V382 M630.5 377 V382 M640.5 377 V382 M651.5 377 V382 M661.5 377 V382 M671.5 377 V382 M681.5 377 V382 M692.5 377 V382 M702.5 377 V382 M712.5 377 V382 M722.5 377 V382 M733.5 377 V382 M743.5 377 V382 M753.5 377 V382 M763.5 377 V382 M774.5 377 V382 M784.5 377 V382 M794.5 377 V382 M804.5 377 V382 M814.5 377 V382 M825.5 377 V382 M835.5 377 V382 M845.5 377 V382 M855.5 377 V382 M866.5 377 V382 M876.5 377 V382 M886.5 377 V382 M895.5 377 V382" stroke="#000" stroke-width="1" fill="none"/>
<text x="238.8" y="175.1" text-anchor="middle">300</text>
<text x="238.8" y="209.3" text-anchor="middle">250</text>
<text x="238.8" y="243.6" text-anchor="middle">200</text>
<text x="238.8" y="277.9" text-anchor="middle">150</text>
<text x="238.8" y="312.1" text-anchor="middle">100</text>
<text x="238.8" y="346.4" text-anchor="middle">50</text>
<text x="238.8" y="380.6" text-anchor="middle">0</text>
<text x="261.5" y="396.8" text-anchor="middle">2023-05-01</text><text x="261.5" y="411.8" text-anchor="middle">00:00:00</text>
<text x="335.1" y="396.8" text-anchor="middle">2023-05-04</text><text x="335.1" y="411.8" text-anchor="middle">14:00:00</text>
<text x="406.8" y="396.8" text-anchor="middle">2023-05-08</text><text x="406.8" y="411.8" text-anchor="middle">02:00:00</text>
<text x="478.4" y="396.8" text-anchor="middle">2023-05-11</text><text x="478.4" y="411.8" text-anchor="middle">14:00:00</text>
<text x="550.1" y="396.8" text-anchor="middle">2023-05-15</text><text x="550.1" y="411.8" text-anchor="middle">02:00:00</text>
<text x="621.7" y="396.8" text-anchor="middle">2023-05-18</text><text x="621.7" y="411.8" text-anchor="middle">14:00:00</text>
<text x="693.3" y="396.8" text-anchor="middle">2023-05-22</text><text x="693.3" y="411.8" text-anchor="middle">02:00:00</text>
<text x="765.0" y="396.8" text-anchor="middle">2023-05-25</text><text x="765.0" y="411.8" text-anchor="middle">14:00:00</text>
<text x="836.6" y="396.8" text-anchor="middle">2023-05-29</text><text x="836.6" y="411.8" text-anchor="middle">02:00:00</text>
</svg><div class="tbl"><div class="tr"><span class="c1">Outgoing Mails</span><span class="c2">4873</span><span class="pb"><b style="width:280px"></b><em>100%</em></span></div><div class="tr alt"><span class="c1">Bounces</span><span class="c2">207</span><span class="pb"><b style="width:12px"></b><em>4%</em></span></div><div class="tr"><span class="c1">Virus Mails</span><span class="c2">0</span><span class="pb"><b style="width:0px"></b><em>0%</em></span></div></div></div></div>
</div>
</body></html>
